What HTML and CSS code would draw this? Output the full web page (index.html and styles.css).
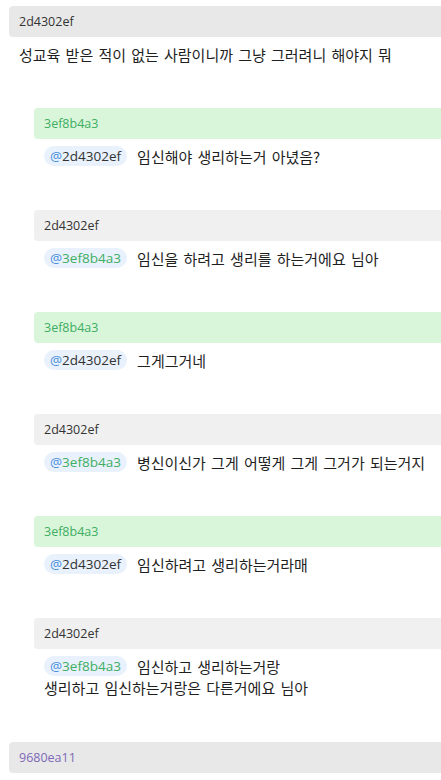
FILE: index.html
```html
<!DOCTYPE html>
<html lang="ko">
<head>
<meta charset="utf-8">
<link rel="stylesheet" href="styles.css">
</head>
<body>
<div class="thread">
  <div class="comment">
    <div class="head head-top"><span class="uid uid-dark">2d4302ef</span></div>
    <div class="body">성교육 받은 적이 없는 사람이니까 그냥 그러려니 해야지 뭐</div>
    <div class="replies">
      <div class="comment reply">
        <div class="head head-green"><span class="uid uid-green">3ef8b4a3</span></div>
        <div class="body"><span class="mention"><span class="at">@</span><span class="uid-dark">2d4302ef</span></span>임신해야 생리하는거 아녔음?</div>
      </div>
      <div class="comment reply">
        <div class="head head-gray"><span class="uid uid-dark">2d4302ef</span></div>
        <div class="body"><span class="mention"><span class="at">@</span><span class="uid-green">3ef8b4a3</span></span>임신을 하려고 생리를 하는거에요 님아</div>
      </div>
      <div class="comment reply">
        <div class="head head-green"><span class="uid uid-green">3ef8b4a3</span></div>
        <div class="body"><span class="mention"><span class="at">@</span><span class="uid-dark">2d4302ef</span></span>그게그거네</div>
      </div>
      <div class="comment reply">
        <div class="head head-gray"><span class="uid uid-dark">2d4302ef</span></div>
        <div class="body"><span class="mention"><span class="at">@</span><span class="uid-green">3ef8b4a3</span></span>병신이신가 그게 어떻게 그게 그거가 되는거지</div>
      </div>
      <div class="comment reply">
        <div class="head head-green"><span class="uid uid-green">3ef8b4a3</span></div>
        <div class="body"><span class="mention"><span class="at">@</span><span class="uid-dark">2d4302ef</span></span>임신하려고 생리하는거라매</div>
      </div>
      <div class="comment reply">
        <div class="head head-gray"><span class="uid uid-dark">2d4302ef</span></div>
        <div class="body"><span class="mention"><span class="at">@</span><span class="uid-green">3ef8b4a3</span></span>임신하고 생리하는거랑<br>생리하고 임신하는거랑은 다른거에요 님아</div>
      </div>
    </div>
  </div>
  <div class="comment">
    <div class="head head-top"><span class="uid uid-purple">9680ea11</span></div>
  </div>
</div>
</body>
</html>
```
FILE: styles.css
```css
html, body {
  margin: 0;
  padding: 0;
  background: #ffffff;
  overflow: hidden;
}
body {
  font-family: "Open Sans", "Noto Sans CJK KR", sans-serif;
  color: #1f1f1f;
  font-size: 14px;
}
.thread {
  width: 480px;
  padding: 6px 0 0 9px;
}
.comment {
  display: flex;
  flex-direction: column;
}
.head {
  height: 31px;
  line-height: 31px;
  padding-left: 10px;
  border-radius: 4px 0 0 4px;
  font-size: 12.5px;
}
.head-top { background: #e8e8e8; }
.head-gray { background: #f0f0f0; }
.head-green { background: #d9f5da; }
.uid-dark { color: #333333; }
.uid-green { color: #3fae63; }
.uid-purple { color: #7e69b8; }
.body {
  padding: 7px 10px 0 10px;
  line-height: 21px;
  font-size: 15px;
  font-family: "Noto Sans CJK KR", "Open Sans", sans-serif;
  word-spacing: 1px;
}
.replies {
  display: flex;
  flex-direction: column;
  padding: 43px 0 1px 25px;
}
.reply {
  margin-bottom: 43px;
}
.mention {
  display: inline-block;
  font-family: "Open Sans", sans-serif;
  font-size: 13.5px;
  line-height: 20px;
  padding: 0 6px;
  margin-right: 10px;
  border-radius: 10px;
  background: #e8f1fc;
  word-spacing: 0;
  vertical-align: top;
}
.at { color: #4a8fdc; }
```
